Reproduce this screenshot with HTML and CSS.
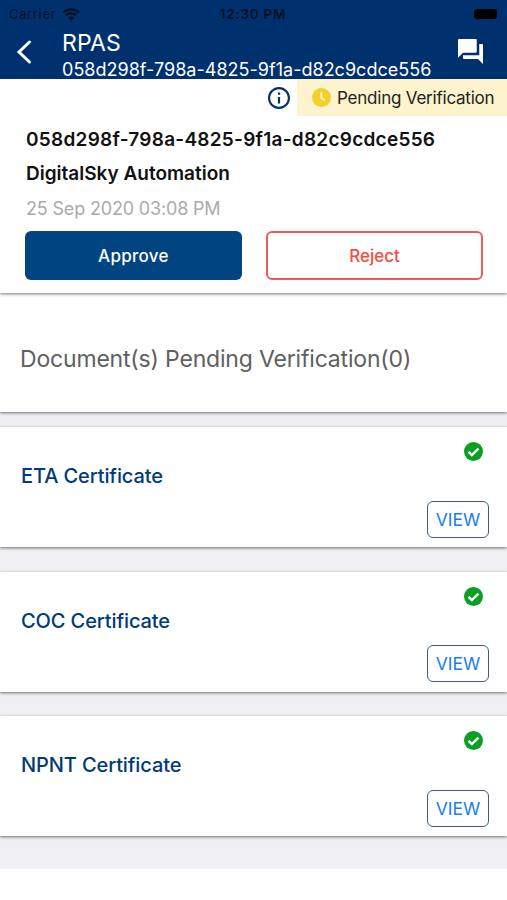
FILE: index.html
```html
<!DOCTYPE html>
<html lang="en">
<head>
  <meta charset="UTF-8">
  <meta name="viewport" content="width=device-width, initial-scale=1">
  <title>RPAS</title>
  <link rel="stylesheet" href="styles.css">
</head>
<body>

<header class="header">
  <div class="status-bar">
    <div class="carrier">
      <span>Carrier</span>
      <svg class="wifi" viewBox="0 0 18 13">
        <path d="M1 4.6a11.5 11.5 0 0 1 16 0M3.9 7.5a7.4 7.4 0 0 1 10.2 0" fill="none" stroke="currentColor" stroke-width="2.3"/>
        <path d="M9 12.8L5.9 9.7a4.4 4.4 0 0 1 6.2 0z" fill="currentColor"/>
      </svg>
    </div>
    <span class="clock">12:30 PM</span>
    <span class="battery"></span>
  </div>
  <div class="nav">
    <svg class="back" viewBox="0 0 16 26">
      <path d="M13.5 3L3 13l10.5 10" fill="none" stroke="currentColor" stroke-width="3" stroke-linecap="round"/>
    </svg>
    <div class="nav-title">
      <h1>RPAS</h1>
      <p>058d298f-798a-4825-9f1a-d82c9cdce556</p>
    </div>
    <svg class="chat" viewBox="2 2 20 20">
      <path d="M21 6h-2v9H6v2c0 .55.45 1 1 1h11l4 4V7c0-.55-.45-1-1-1zm-4 6V3c0-.55-.45-1-1-1H3c-.55 0-1 .45-1 1v14l4-4h10c.55 0 1-.45 1-1z" fill="currentColor"/>
    </svg>
  </div>
</header>

<section class="card summary">
  <div class="status-row">
    <svg class="info" viewBox="2 2 20 20">
      <path d="M11 7h2v2h-2zm0 4h2v6h-2zm1-9C6.48 2 2 6.48 2 12s4.48 10 10 10 10-4.48 10-10S17.52 2 12 2zm0 18c-4.41 0-8-3.59-8-8s3.59-8 8-8 8 3.59 8 8-3.59 8-8 8z" fill="currentColor"/>
    </svg>
    <div class="badge">
      <svg class="badge-clock" viewBox="0 0 20 20">
        <circle cx="10" cy="10" r="10" fill="#f3cf2c"/>
        <path d="M9.8 4.5v6l3.8 2.2" fill="none" stroke="#fdf3cc" stroke-width="2"/>
      </svg>
      <span>Pending Verification</span>
    </div>
  </div>
  <div class="summary-body">
    <p class="uin">058d298f-798a-4825-9f1a-d82c9cdce556</p>
    <p class="owner">DigitalSky Automation</p>
    <p class="date">25 Sep 2020 03:08 PM</p>
    <div class="actions">
      <button type="button" class="btn btn-approve">Approve</button>
      <button type="button" class="btn btn-reject">Reject</button>
    </div>
  </div>
</section>

<main class="documents">
  <section class="card pending">
    <h2>Document(s) Pending Verification(0)</h2>
  </section>

  <section class="card document">
    <h3>ETA Certificate</h3>
    <div class="document-side">
      <svg class="check" viewBox="0 0 20 20">
        <circle cx="10" cy="10" r="10" fill="#07a020"/>
        <path d="M4.8 10.3l3.5 3.5 6.9-6.9" fill="none" stroke="#fff" stroke-width="2.6"/>
      </svg>
      <button type="button" class="btn-view">VIEW</button>
    </div>
  </section>

  <section class="card document">
    <h3>COC Certificate</h3>
    <div class="document-side">
      <svg class="check" viewBox="0 0 20 20">
        <circle cx="10" cy="10" r="10" fill="#07a020"/>
        <path d="M4.8 10.3l3.5 3.5 6.9-6.9" fill="none" stroke="#fff" stroke-width="2.6"/>
      </svg>
      <button type="button" class="btn-view">VIEW</button>
    </div>
  </section>

  <section class="card document">
    <h3>NPNT Certificate</h3>
    <div class="document-side">
      <svg class="check" viewBox="0 0 20 20">
        <circle cx="10" cy="10" r="10" fill="#07a020"/>
        <path d="M4.8 10.3l3.5 3.5 6.9-6.9" fill="none" stroke="#fff" stroke-width="2.6"/>
      </svg>
      <button type="button" class="btn-view">VIEW</button>
    </div>
  </section>
</main>

</body>
</html>
```
FILE: styles.css
```css
* {
  box-sizing: border-box;
}
body {
  margin: 0;
  font-family: Inter, "Liberation Sans", sans-serif;
  background: #fff;
  color: #111;
}
h1, h2, h3, p {
  margin: 0;
  font-weight: 400;
  white-space: nowrap;
}
svg {
  display: block;
  flex: none;
}
button {
  font-family: inherit;
  padding: 0;
  cursor: pointer;
}

/* header */
.header {
  position: relative;
  z-index: 2;
  height: 79px;
  background: #00316f;
  color: #fff;
}
.status-bar {
  display: grid;
  grid-template-columns: 1fr auto 1fr;
  align-items: center;
  height: 28px;
  padding: 0 10px 0 9px;
  color: #06101f;
  font-size: 13px;
}
.carrier {
  display: flex;
  align-items: center;
  gap: 6px;
  letter-spacing: 0.65px;
}
.wifi {
  width: 18px;
  height: 13px;
}
.clock {
  font-weight: 600;
  font-size: 13.5px;
  letter-spacing: 0.75px;
}
.battery {
  justify-self: end;
  width: 23px;
  height: 10px;
  border-radius: 3px;
  background: #000;
}
.nav {
  display: flex;
  height: 51px;
  padding: 0 24px 0 16px;
}
.back {
  width: 16px;
  height: 26px;
  margin-top: 11px;
}
.nav-title {
  flex: 1;
  margin-left: 30px;
}
.nav-title h1 {
  font-size: 23px;
  line-height: 31px;
  letter-spacing: 0.1px;
}
.nav-title p {
  font-size: 18px;
  line-height: 22px;
  letter-spacing: 0.02px;
}
.chat {
  width: 25px;
  height: 25px;
  margin-top: 11px;
}

/* cards */
.card {
  background: #fff;
  box-shadow: 0 1px 3px rgba(0,0,0,0.55);
}
.summary {
  position: relative;
  height: 214px;
}
.status-row {
  display: flex;
  justify-content: flex-end;
  align-items: center;
  gap: 7px;
  height: 37px;
}
.info {
  width: 22px;
  height: 22px;
  color: #00316f;
}
.badge {
  display: flex;
  align-items: center;
  gap: 6px;
  width: 210px;
  height: 37px;
  padding-left: 15px;
  background: #fdf3cc;
  color: #222;
  font-size: 17px;
  letter-spacing: -0.22px;
  white-space: nowrap;
}
.badge-clock {
  width: 19px;
  height: 19px;
}
.summary-body {
  padding: 7px 24px 0 25px;
}
.uin, .owner {
  padding-left: 1px;
  font-size: 19px;
  font-weight: 600;
  line-height: 34px;
}
.uin {
  letter-spacing: 0.26px;
}
.date {
  padding-left: 1px;
  font-size: 18px;
  line-height: 36px;
  letter-spacing: -0.17px;
  color: #aaa;
}
.actions {
  display: grid;
  grid-template-columns: 1fr 1fr;
  gap: 24px;
  margin-top: 4px;
}
.btn {
  height: 49px;
  border-radius: 6px;
  font-size: 17px;
  font-weight: 500;
}
.btn-approve {
  border: none;
  background: #004482;
  color: #fff;
  letter-spacing: 0.3px;
}
.btn-reject {
  border: 2px solid #ee5a5d;
  background: #fff;
  color: #fb4a43;
}

/* documents */
.documents {
  height: 576px;
  background: #efeff4;
}
.pending {
  display: flex;
  align-items: center;
  height: 119px;
  padding: 12px 20px 0;
}
.pending h2 {
  font-size: 23px;
  letter-spacing: -0.18px;
  color: #606060;
}
.document {
  display: flex;
  justify-content: space-between;
  height: 120px;
  margin-top: 24.5px;
  padding: 15px 18px 0 21px;
}
.pending + .document {
  margin-top: 15px;
}
.document h3 {
  margin-top: 20px;
  font-size: 20px;
  font-weight: 500;
  line-height: 29px;
  letter-spacing: -0.1px;
  color: #003a78;
}
.document-side {
  display: flex;
  flex-direction: column;
  align-items: flex-end;
  gap: 39.5px;
}
.check {
  width: 19px;
  height: 19px;
  margin-right: 6px;
}
.btn-view {
  width: 62px;
  height: 37px;
  border: 1.5px solid #3a5c8c;
  border-radius: 6px;
  background: #fff;
  color: #147ff0;
  font-size: 17.5px;
}
```
